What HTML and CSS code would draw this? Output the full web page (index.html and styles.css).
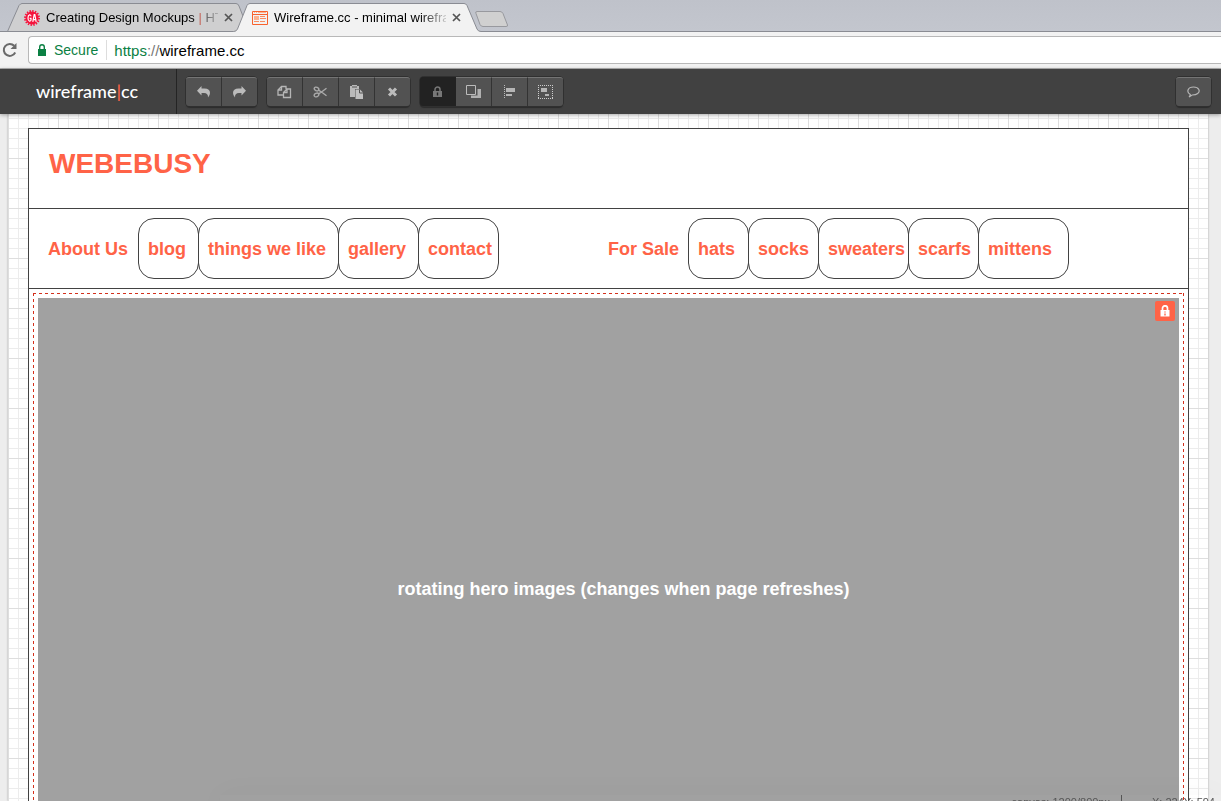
FILE: index.html
```html
<!DOCTYPE html>
<html lang="en">
<head>
<meta charset="utf-8">
<title>Wireframe.cc - minimal wireframing tool</title>
<link rel="stylesheet" href="styles.css">
</head>
<body>
<div class="tabstrip">
  <svg class="tab-shapes" width="520" height="32" viewBox="0 0 520 32" aria-hidden="true">
    <path d="M7.500 31.500L19 5.500Q20.500 3.500 22 3.500H236Q238 3.500 239 6L249 31.500Z" fill="#cfcfd0" stroke="#8a8c93"/>
    <path d="M476 13.500Q475 11.500 477 11.500H500Q502 11.500 503 13.500L507.500 25Q508 26.500 506 26.500H483Q481 26.500 480 24.500Z" fill="#d0d0d0" stroke="#98999e"/>
    <path d="M0 31.500H233.500Q236.500 31.500 237.500 29L247 5.500Q248 3.500 250 3.500H464Q466 3.500 467 5.500L477 29Q478 31.500 481 31.500H520V33H0Z" fill="#f2f2f2"/>
    <path d="M0 31.500H233.500Q236.500 31.500 237.500 29L247 5.500Q248 3.500 250 3.500H464Q466 3.500 467 5.500L477 29Q478 31.500 481 31.500H520" fill="none" stroke="#8a8c93"/>
  </svg>
  <div class="tab tab-first">
    <svg width="16" height="16" viewBox="0 0 16 16" aria-hidden="true"><circle cx="8" cy="8" r="6.500" fill="#f5153d"/><circle cx="8" cy="8" r="7" fill="none" stroke="#f5153d" stroke-width="2" stroke-dasharray="1.400 1.350"/><path d="M7 6.300C6.800 4.200 4 4.200 4 8s2.800 3.800 3 1.700V8.400H5.700M8.800 11.800L10.200 4.500h.600l1.400 7.300M9.200 9.600h2.600" fill="none" stroke="#fff" stroke-width="1.200"/></svg>
    <span class="tab-title">Creating Design Mockups <span class="bar">|</span> HT</span>
    <button class="close" type="button" aria-label="Close tab"><svg width="9" height="9" viewBox="0 0 9 9"><path d="M1 1l7 7M8 1L1 8" stroke="#555" stroke-width="1.700"/></svg></button>
  </div>
  <div class="tab tab-active">
    <svg width="16" height="14" viewBox="0 0 16 14" aria-hidden="true"><path d="M.500 .500h15v13H.500zM0 3.500h16" fill="none" stroke="#f8622c"/><path d="M2 1.500h1M4 1.500h1M6 1.500h8" stroke="#fbb18f"/><path d="M2 5h5v4H2z" fill="#fbb18f"/><path d="M8 5.500h5M8 7.500h6M2 10.500h5M8 10.500h5" stroke="#f98d62"/></svg>
    <span class="tab-title">Wireframe.cc - minimal wirefra</span>
    <button class="close" type="button" aria-label="Close tab"><svg width="9" height="9" viewBox="0 0 9 9"><path d="M1 1l7 7M8 1L1 8" stroke="#555" stroke-width="1.700"/></svg></button>
  </div>
</div>
<div class="addressbar">
  <button class="reload" type="button" aria-label="Reload"><svg width="16" height="16" viewBox="0 0 16 16"><path d="M13.200 10.500A6 6 0 1 1 12.200 3.800" fill="none" stroke="#6a6a6a" stroke-width="2"/><path d="M14.500 1v6h-6z" fill="#6a6a6a"/></svg></button>
  <div class="omnibox">
    <svg width="8" height="12" viewBox="0 0 8 12" aria-hidden="true"><path d="M0 5h8v7H0z" fill="#0b8043"/><path d="M1.700 5V3a2.300 2.300 0 0 1 4.600 0v2" fill="none" stroke="#0b8043" stroke-width="1.400"/></svg>
    <span class="secure">Secure</span>
    <span class="url"><span class="scheme">https</span><span class="slashes">://</span>wireframe.cc</span>
  </div>
</div>
<header class="toolbar">
  <div class="logo">wireframe<span class="logo-bar">|</span>cc</div>
  <div class="tools">
    <div class="group">
      <button type="button" aria-label="Undo"><svg width="15" height="12" viewBox="0 0 15 12"><path d="M5.500 0v2.500h3Q14 2.500 14 7q0 2.500-2 4.500.300-4.500-4-4.500H5.500v2.500L1 4.700z" fill="#bbb"/></svg></button>
      <button type="button" aria-label="Redo"><svg width="15" height="12" viewBox="0 0 15 12"><path d="M9.500 0v2.500h-3Q1 2.500 1 7q0 2.500 2 4.500-.300-4.500 4-4.500h2.500v2.500L14 4.700z" fill="#bbb"/></svg></button>
    </div>
    <div class="group">
      <button type="button" aria-label="Copy"><svg width="15" height="14" viewBox="0 0 15 14"><path d="M6 10H1V5l3.500-3.500H9V4M4.500 1.500V5H1M6.500 7.500L10 4h3.500v8.500h-7zM10 4v3.500H6.500" fill="none" stroke="#b5b5b5" stroke-width="1.300"/></svg></button>
      <button type="button" aria-label="Cut"><svg width="15" height="12" viewBox="0 0 15 12"><g fill="none" stroke="#aaa" stroke-width="1.400"><ellipse cx="3.500" cy="3" rx="2.400" ry="1.700" transform="rotate(25 3.500 3)"/><ellipse cx="3.500" cy="9" rx="2.400" ry="1.700" transform="rotate(-25 3.500 9)"/><path d="M5.500 4.200l3 1.800 5 3.800M5.500 7.800L8.500 6l5-3.800"/></g></svg></button>
      <button type="button" aria-label="Paste"><svg width="13" height="14" viewBox="0 0 13 14"><path d="M0 1h2V0h5v1h2v3H5v8H0z" fill="#b9b9b9"/><path d="M2 2h5" stroke="#555"/><path d="M5.500 4.500h4.500l3 3V14H5.500z" fill="#c0c0c0"/><path d="M9.500 4.500V8H13" fill="none" stroke="#525252"/></svg></button>
      <button type="button" aria-label="Delete"><svg width="11" height="10" viewBox="0 0 11 10"><path d="M2 1.500l7 7M9 1.500l-7 7" stroke="#bcbcbc" stroke-width="3"/></svg></button>
    </div>
    <div class="group">
      <button class="on" type="button" aria-label="Lock"><svg width="9" height="12" viewBox="0 0 9 12"><path d="M0 5h9v6H0z" fill="#777"/><path d="M2 5V3.500a2.500 2.500 0 0 1 5 0V5" fill="none" stroke="#777" stroke-width="1.500"/><path d="M4.500 6.500v3" stroke="#222" stroke-width="1.400"/></svg></button>
      <button type="button" aria-label="Arrange"><svg width="15" height="14" viewBox="0 0 15 14"><path d="M5 4h10v9H5z" fill="#b0b0b0"/><path d="M0 0h11.500v10.500H0z" fill="#525252"/><path d="M.500 .500h9v9h-9z" fill="none" stroke="#bbb"/></svg></button>
      <button type="button" aria-label="Align"><svg width="11" height="14" viewBox="0 0 11 14"><path d="M.500 0v14" stroke="#bbb" stroke-dasharray="1 1"/><path d="M2 3h9v4H2zM2 9h6v2H2z" fill="#b5b5b5"/></svg></button>
      <button type="button" aria-label="Group"><svg width="15" height="14" viewBox="0 0 15 14"><path d="M0 .500h15M0 13.500h15M.500 0v14M14.500 0v14" fill="none" stroke="#ccc" stroke-dasharray="1 1"/><path d="M3 3h6v4H3zM7 9h4v2H7z" fill="#b5b5b5"/></svg></button>
    </div>
  </div>
  <div class="group feedback">
    <button type="button" aria-label="Feedback"><svg width="13" height="12" viewBox="0 0 13 12"><path d="M3.300 8.500C-1 6 .800 1 6.500 1s7 4.500 4.200 6.500C9 9 7 9 5.200 9L2 11q1.300-1 1.300-2.500z" fill="none" stroke="#b5b5b5" stroke-width="1.200"/></svg></button>
  </div>
</header>
<main class="workspace">
  <div class="canvas">
    <div class="page">
      <h1 class="brand">WEBEBUSY</h1>
      <div class="navrow">
        <nav class="menu">
          <span class="menu-title">About Us</span>
          <a class="w60" href="#">blog</a><a class="w140" href="#">things we like</a><a class="w80" href="#">gallery</a><a class="w80" href="#">contact</a>
        </nav>
        <nav class="menu">
          <span class="menu-title short">For Sale</span>
          <a class="w60" href="#">hats</a><a class="w70" href="#">socks</a><a class="w90" href="#">sweaters</a><a class="w70" href="#">scarfs</a><a class="w90" href="#">mittens</a>
        </nav>
      </div>
      <section class="selection">
        <div class="hero">
          <p>rotating hero images (changes when page refreshes)</p>
          <button class="lock" type="button" aria-label="Unlock"><svg width="10" height="12" viewBox="0 0 10 12"><path d="M.500 5h9v6.500h-9z" fill="#fff"/><path d="M2.500 5V3.300a2.500 2.500 0 0 1 5 0V5" fill="none" stroke="#fff" stroke-width="1.700"/><path d="M5 6.500v1M5 8.500v2" stroke="#ff6347" stroke-width="1.400"/></svg></button>
        </div>
      </section>
    </div>
  </div>
</main>
<footer class="status"><span class="size">canvas: 1200/800px</span><span class="divider"></span><span class="pos">X: 224</span><span>Y: 594</span></footer>
</body>
</html>
```
FILE: styles.css
```css
* { box-sizing: border-box; }
body {
  margin: 0;
  height: 100vh;
  overflow: hidden;
  display: flex;
  flex-direction: column;
  background: #ededed;
  font-family: "Liberation Sans", Arial, sans-serif;
}
button { border: 0; padding: 0; background: none; display: flex; align-items: center; justify-content: center; }
svg { display: block; flex: none; }
h1, p { margin: 0; }

.tabstrip {
  position: relative;
  display: flex;
  height: 32px;
  flex: none;
  padding-left: 24px;
  background: linear-gradient(#bfc2ca, #c3c6ce);
  border-bottom: 1px solid #8a8c93;
}
.tab-shapes { position: absolute; left: 0; top: 0; }
.tab { position: relative; display: flex; align-items: center; padding-top: 4px; gap: 6px; width: 228px; font-size: 13px; }
.tab-title { width: 172px; white-space: nowrap; -webkit-mask-image: linear-gradient(90deg, #000 145px, transparent 177px); mask-image: linear-gradient(90deg, #000 145px, transparent 177px); }
.bar { color: #c0392b; }

.addressbar { display: flex; align-items: center; flex: none; height: 37px; background: #f2f2f2; border-bottom: 1px solid #b0b0b0; }
.reload { width: 28px; padding-right: 8px; }
.omnibox { flex: 1; display: flex; align-items: center; height: 28px; padding-left: 9px; background: #fff; border: 1px solid #b8b8b8; border-right: 0; border-radius: 4px 0 0 4px; font-size: 14px; }
.secure { margin-left: 8px; padding-right: 8px; line-height: 20px; border-right: 1px solid #ddd; color: #0b8043; }
.url { margin-left: 7px; font-size: 15px; }
.scheme { color: #0b8043; }
.slashes { color: #777; }

.toolbar { position: relative; z-index: 1; display: flex; flex: none; height: 45px; background: #414141; box-shadow: 0 1px 4px rgba(0, 0, 0, .35); }
.logo { width: 177px; padding-left: 36px; border-right: 1px solid #242424; color: #fff; font: 500 18px/44px Lato, sans-serif; }
.logo-bar { color: #ff6347; }
.tools { display: flex; flex: 1; gap: 10px; padding-left: 9px; }
.group { display: flex; align-self: flex-start; margin-top: 8px; border-radius: 4px; box-shadow: 0 0 0 1px #303030, 0 2px 1px #2c2c2c; }
.group button { width: 36px; height: 29px; background: #525252; border-top: 1px solid #747474; border-right: 1px solid #333; }
.group button:first-child { border-radius: 3px 0 0 3px; }
.group button:last-child { width: 35px; border-right: 0; border-radius: 0 3px 3px 0; }
.group .on { background: #222; border-color: #222; }
.feedback { margin-right: 10px; }
.feedback button:only-child { border-radius: 3px; }

.workspace { flex: 1; min-height: 0; display: flex; padding: 0 13px 0 8px; }
.canvas {
  flex: 1;
  display: flex;
  padding: 14px 19px 0 20px;
  background-color: #fff;
  background-image:
    linear-gradient(#dedede 1px, transparent 1px),
    linear-gradient(90deg, #dedede 1px, transparent 1px),
    linear-gradient(#ececec 1px, transparent 1px),
    linear-gradient(90deg, #ececec 1px, transparent 1px);
  background-size: 50px 50px, 50px 50px, 10px 10px, 10px 10px;
  background-position: 0 -6px;
  box-shadow: 0 0 2px rgba(0, 0, 0, .3);
}
.page { flex: 1; display: flex; flex-direction: column; background: #fff; border: 1px solid #424242; border-bottom: 0; }
.brand { height: 80px; padding: 18px 20px; border-bottom: 1px solid #424242; color: #ff6347; font-size: 28px; line-height: 34px; }
.navrow { display: flex; gap: 110px; height: 80px; padding: 9px 19px; border-bottom: 1px solid #424242; color: #ff6347; font-size: 18px; font-weight: bold; line-height: 63px; white-space: nowrap; }
.menu { display: flex; }
.menu-title { width: 90px; }
.short { width: 80px; }
.menu a { height: 61px; margin-right: -1px; padding-left: 9px; border: 1px solid #424242; border-radius: 16px; color: inherit; text-decoration: none; line-height: 61px; }
.w60 { width: 61px; }
.w70 { width: 71px; }
.w80 { width: 81px; }
.w90 { width: 91px; }
.w140 { width: 141px; }
.selection {
  flex: 1;
  display: flex;
  margin: 4px 4px 0;
  padding: 5px 5px 0;
  background:
    repeating-linear-gradient(90deg, #d3301c 0 3px, transparent 3px 6px) top / 100% 1px no-repeat,
    repeating-linear-gradient(#d3301c 0 3px, transparent 3px 6px) left / 1px 100% no-repeat,
    repeating-linear-gradient(#d3301c 0 3px, transparent 3px 6px) right / 1px 100% no-repeat;
}
.hero { position: relative; flex: 1; padding: 281px 0 0 30px; background: #a1a1a1; color: #fff; font-size: 18px; font-weight: bold; line-height: 20px; text-align: center; }
.lock { position: absolute; top: 3px; right: 4px; width: 20px; height: 20px; border-radius: 2px; background: #ff6347; }
.status { position: fixed; left: 220px; right: 0; bottom: 0; z-index: 2; display: flex; justify-content: flex-end; height: 6px; padding-right: 6px; box-shadow: 0 6px 30px rgba(0, 0, 0, .1); color: #555; font-size: 11px; line-height: 15px; }
.divider { width: 1px; height: 6px; margin: 0 30px 0 11px; background: #555; }
```
